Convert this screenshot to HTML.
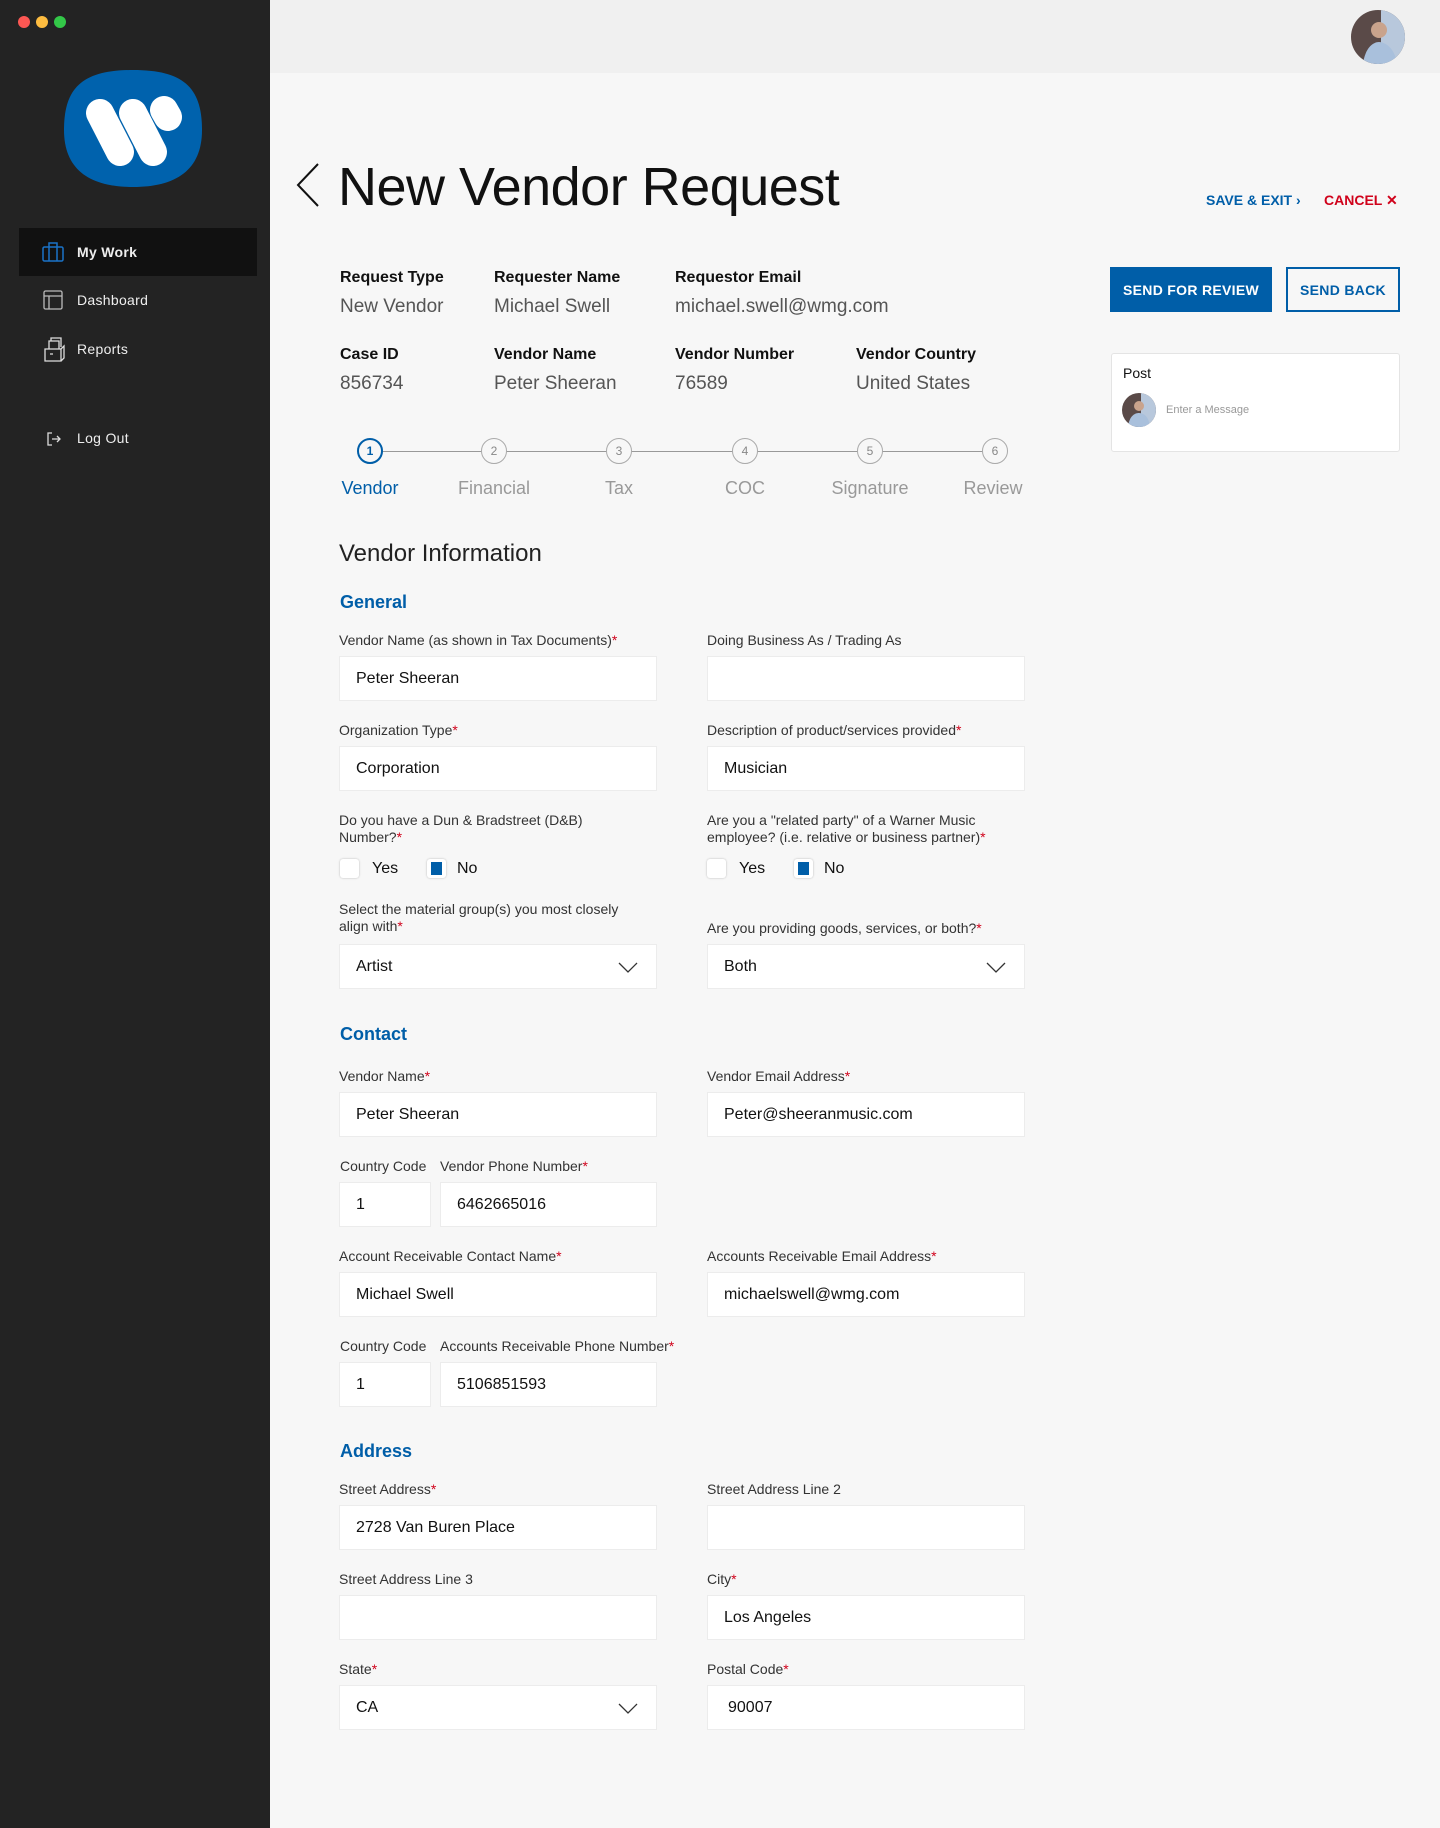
<!DOCTYPE html>
<html><head><meta charset="utf-8"><style>
*{box-sizing:border-box;margin:0;padding:0}
body{width:1440px;height:1828px;background:#f7f7f7;font-family:"Liberation Sans",Arial,sans-serif;position:relative;overflow:hidden;color:#111}
.a{position:absolute}
#side{left:0;top:0;width:270px;height:1828px;background:#232323}
#top{left:270px;top:0;width:1170px;height:73px;background:#f0f0f0}
.nav{color:#eee;font-size:14px;letter-spacing:.3px}
.il{font-size:16px;font-weight:bold;color:#111}
.iv{font-size:19px;color:#555}
.lb{font-size:14px;color:#333;line-height:17px}
.lb i{color:#d0021b;font-style:normal}
.in{background:#fff;border:1px solid #ececec;height:45px;font-size:16px;color:#111;padding:0 16px;display:flex;align-items:center}
.L{left:339px;width:318px}.R{left:707px;width:318px}
.h{font-size:18px;font-weight:bold;color:#005ea8}
.st{width:26px;height:26px;border-radius:50%;border:1.5px solid #aaa;background:#f7f7f7;font-size:12px;color:#888;display:flex;align-items:center;justify-content:center}
.sl{font-size:18px;color:#999;width:120px;text-align:center}
.cb{width:19px;height:19px;background:#fff;border-radius:3px;box-shadow:0 0 2px rgba(0,0,0,.25)}
.cb.on::after{content:"";position:absolute;left:4px;top:3px;width:11px;height:13px;background:#005ea8}
.ck{font-size:16px;color:#111}
.chev{position:absolute;right:18px;top:12px}
</style></head><body>
<div id="side" class="a"></div>
<div id="top" class="a"></div>
<div class="a" style="left:18px;top:16px;width:12px;height:12px;border-radius:50%;background:#fc5753"></div>
<div class="a" style="left:36px;top:16px;width:12px;height:12px;border-radius:50%;background:#fdbc40"></div>
<div class="a" style="left:54px;top:16px;width:12px;height:12px;border-radius:50%;background:#33c748"></div>
<svg class="a" style="left:64px;top:70px" width="138" height="117" viewBox="0 0 138 117"><path d="M69 0C120 0 138 18 138 60C138 100 112 117 69 117C26 117 0 100 0 60C0 18 18 0 69 0Z" fill="#0062ad"/><g stroke="#fff" stroke-width="28" stroke-linecap="round" fill="none"><line x1="36" y1="43" x2="56" y2="82"/><line x1="69" y1="43" x2="89" y2="82"/><line x1="100" y1="40" x2="104" y2="47"/></g></svg>
<div class="a" style="left:19px;top:228px;width:238px;height:48px;background:#111"></div>
<svg class="a" style="left:42px;top:242px" width="22" height="20" viewBox="0 0 22 20" fill="none" stroke="#1a73c8" stroke-width="1.5"><rect x="1" y="5" width="20" height="14" rx="1.5"/><path d="M7 5V1h8v4M7 5v14M15 5v14"/></svg>
<div class="a nav" style="left:77px;top:244px;font-weight:bold">My Work</div>
<svg class="a" style="left:43px;top:290px" width="20" height="20" viewBox="0 0 20 20" fill="none" stroke="#bbb" stroke-width="1.3"><rect x="1" y="1" width="18" height="18" rx="1.5"/><path d="M1 6h18M6 6v13"/></svg>
<div class="a nav" style="left:77px;top:292px">Dashboard</div>
<svg class="a" style="left:43px;top:337px" width="22" height="25" viewBox="0 0 22 25" fill="none" stroke="#ddd" stroke-width="1.3"><path d="M2 12h16v12H2zM18 12l3-3v12l-3 3M6 12V4h10v8M8 4V1h10v9M7 17h3"/></svg>
<div class="a nav" style="left:77px;top:341px">Reports</div>
<svg class="a" style="left:47px;top:432px" width="14" height="14" viewBox="0 0 14 14" fill="none" stroke="#ddd" stroke-width="1.3"><path d="M5 1H1v12h4M5 7h8M10 4l3 3-3 3"/></svg>
<div class="a nav" style="left:77px;top:430px">Log Out</div>
<svg class="a" style="left:1351px;top:10px" width="54" height="54"><defs><clipPath id="c1"><circle cx="27" cy="27" r="27"/></clipPath></defs><g clip-path="url(#c1)"><rect width="54" height="54" fill="#5a4a48"/><rect x="30" width="24" height="54" fill="#b8c8dc"/><circle cx="28" cy="20" r="8" fill="#c9a38c"/><path d="M12 54c2-16 10-22 16-22s16 6 18 22z" fill="#a9c0dc"/></g></svg>
<svg class="a" style="left:296px;top:163px" width="24" height="44" viewBox="0 0 24 44"><path d="M22 1L2 22l20 21" fill="none" stroke="#111" stroke-width="2"/></svg>
<div class="a" style="left:338px;top:156px;font-size:54px;color:#111;letter-spacing:-.5px">New Vendor Request</div>
<div class="a" style="left:1206px;top:192px;font-size:14px;font-weight:bold;color:#005ea8">SAVE &amp; EXIT ›</div>
<div class="a" style="left:1324px;top:192px;font-size:14px;font-weight:bold;color:#d0021b">CANCEL ✕</div>
<div class="a" style="left:1110px;top:267px;width:162px;height:45px;background:#005ea8;color:#fff;font-size:14px;font-weight:bold;display:flex;align-items:center;justify-content:center;letter-spacing:.3px">SEND FOR REVIEW</div>
<div class="a" style="left:1286px;top:267px;width:114px;height:45px;border:2px solid #005ea8;color:#005ea8;font-size:14px;font-weight:bold;display:flex;align-items:center;justify-content:center;letter-spacing:.3px">SEND BACK</div>
<div class="a" style="left:1111px;top:353px;width:289px;height:99px;background:#fff;border:1px solid #e4e4e4;border-radius:3px"></div>
<div class="a" style="left:1123px;top:365px;font-size:14px;color:#111">Post</div>
<svg class="a" style="left:1122px;top:393px" width="34" height="34"><defs><clipPath id="c2"><circle cx="17" cy="17" r="17"/></clipPath></defs><g clip-path="url(#c2)"><rect width="34" height="34" fill="#5a4a48"/><rect x="19" width="15" height="34" fill="#b8c8dc"/><circle cx="17" cy="13" r="5" fill="#c9a38c"/><path d="M6 34c1-10 6-14 11-14s10 4 11 14z" fill="#a9c0dc"/></g></svg>
<div class="a" style="left:1166px;top:404px;font-size:11px;color:#999">Enter a Message</div>

<div class="a il" style="left:340px;top:269px">Request Type</div><div class="a iv" style="left:340px;top:296px">New Vendor</div>
<div class="a il" style="left:494px;top:269px">Requester Name</div><div class="a iv" style="left:494px;top:296px">Michael Swell</div>
<div class="a il" style="left:675px;top:269px">Requestor Email</div><div class="a iv" style="left:675px;top:296px">michael.swell@wmg.com</div>
<div class="a il" style="left:340px;top:346px">Case ID</div><div class="a iv" style="left:340px;top:373px">856734</div>
<div class="a il" style="left:494px;top:346px">Vendor Name</div><div class="a iv" style="left:494px;top:373px">Peter Sheeran</div>
<div class="a il" style="left:675px;top:346px">Vendor Number</div><div class="a iv" style="left:675px;top:373px">76589</div>
<div class="a il" style="left:856px;top:346px">Vendor Country</div><div class="a iv" style="left:856px;top:373px">United States</div>

<div class="a" style="left:370px;top:451px;width:625px;height:1px;background:#999"></div>
<div class="a st" style="left:357px;top:438px;border:2px solid #005ea8;color:#005ea8;font-weight:bold">1</div>
<div class="a st" style="left:481px;top:438px">2</div>
<div class="a st" style="left:606px;top:438px">3</div>
<div class="a st" style="left:732px;top:438px">4</div>
<div class="a st" style="left:857px;top:438px">5</div>
<div class="a st" style="left:982px;top:438px">6</div>
<div class="a sl" style="left:310px;top:478px;color:#005ea8">Vendor</div>
<div class="a sl" style="left:434px;top:478px">Financial</div>
<div class="a sl" style="left:559px;top:478px">Tax</div>
<div class="a sl" style="left:685px;top:478px">COC</div>
<div class="a sl" style="left:810px;top:478px">Signature</div>
<div class="a sl" style="left:933px;top:478px">Review</div>

<div class="a" style="left:339px;top:540px;font-size:24px;color:#222">Vendor Information</div>
<div class="a h" style="left:340px;top:592px">General</div>

<div class="a lb L" style="top:632px">Vendor Name (as shown in Tax Documents)<i>*</i></div>
<div class="a lb R" style="top:632px">Doing Business As / Trading As</div>
<div class="a in L" style="top:656px">Peter Sheeran</div>
<div class="a in R" style="top:656px"></div>
<div class="a lb L" style="top:722px">Organization Type<i>*</i></div>
<div class="a lb R" style="top:722px">Description of product/services provided<i>*</i></div>
<div class="a in L" style="top:746px">Corporation</div>
<div class="a in R" style="top:746px">Musician</div>
<div class="a lb L" style="top:812px">Do you have a Dun &amp; Bradstreet (D&amp;B)<br>Number?<i>*</i></div>
<div class="a lb R" style="top:812px">Are you a "related party" of a Warner Music<br>employee? (i.e. relative or business partner)<i>*</i></div>
<div class="a cb" style="left:340px;top:859px"></div><div class="a ck" style="left:372px;top:860px">Yes</div>
<div class="a cb on" style="left:427px;top:859px"></div><div class="a ck" style="left:457px;top:860px">No</div>
<div class="a cb" style="left:707px;top:859px"></div><div class="a ck" style="left:739px;top:860px">Yes</div>
<div class="a cb on" style="left:794px;top:859px"></div><div class="a ck" style="left:824px;top:860px">No</div>
<div class="a lb L" style="top:901px">Select the material group(s) you most closely<br>align with<i>*</i></div>
<div class="a lb R" style="top:920px">Are you providing goods, services, or both?<i>*</i></div>
<div class="a in L" style="top:944px">Artist<svg class="chev" width="20" height="20" viewBox="0 0 20 20"><path d="M1 6l9 9 9-9" fill="none" stroke="#333" stroke-width="1.3"/></svg></div>
<div class="a in R" style="top:944px">Both<svg class="chev" width="20" height="20" viewBox="0 0 20 20"><path d="M1 6l9 9 9-9" fill="none" stroke="#333" stroke-width="1.3"/></svg></div>

<div class="a h" style="left:340px;top:1024px">Contact</div>
<div class="a lb L" style="top:1068px">Vendor Name<i>*</i></div>
<div class="a lb R" style="top:1068px">Vendor Email Address<i>*</i></div>
<div class="a in L" style="top:1092px">Peter Sheeran</div>
<div class="a in R" style="top:1092px">Peter@sheeranmusic.com</div>
<div class="a lb" style="left:340px;top:1158px">Country Code</div>
<div class="a lb" style="left:440px;top:1158px">Vendor Phone Number<i>*</i></div>
<div class="a in" style="left:339px;width:92px;top:1182px">1</div>
<div class="a in" style="left:440px;width:217px;top:1182px">6462665016</div>
<div class="a lb L" style="top:1248px">Account Receivable Contact Name<i>*</i></div>
<div class="a lb R" style="top:1248px">Accounts Receivable Email Address<i>*</i></div>
<div class="a in L" style="top:1272px">Michael Swell</div>
<div class="a in R" style="top:1272px">michaelswell@wmg.com</div>
<div class="a lb" style="left:340px;top:1338px">Country Code</div>
<div class="a lb" style="left:440px;top:1338px">Accounts Receivable Phone Number<i>*</i></div>
<div class="a in" style="left:339px;width:92px;top:1362px">1</div>
<div class="a in" style="left:440px;width:217px;top:1362px">5106851593</div>

<div class="a h" style="left:340px;top:1441px">Address</div>
<div class="a lb L" style="top:1481px">Street Address<i>*</i></div>
<div class="a lb R" style="top:1481px">Street Address Line 2</div>
<div class="a in L" style="top:1505px">2728 Van Buren Place</div>
<div class="a in R" style="top:1505px"></div>
<div class="a lb L" style="top:1571px">Street Address Line 3</div>
<div class="a lb R" style="top:1571px">City<i>*</i></div>
<div class="a in L" style="top:1595px"></div>
<div class="a in R" style="top:1595px">Los Angeles</div>
<div class="a lb L" style="top:1661px">State<i>*</i></div>
<div class="a lb R" style="top:1661px">Postal Code<i>*</i></div>
<div class="a in L" style="top:1685px">CA<svg class="chev" width="20" height="20" viewBox="0 0 20 20"><path d="M1 6l9 9 9-9" fill="none" stroke="#333" stroke-width="1.3"/></svg></div>
<div class="a in R" style="top:1685px;padding-left:20px">90007</div>
</body></html>
